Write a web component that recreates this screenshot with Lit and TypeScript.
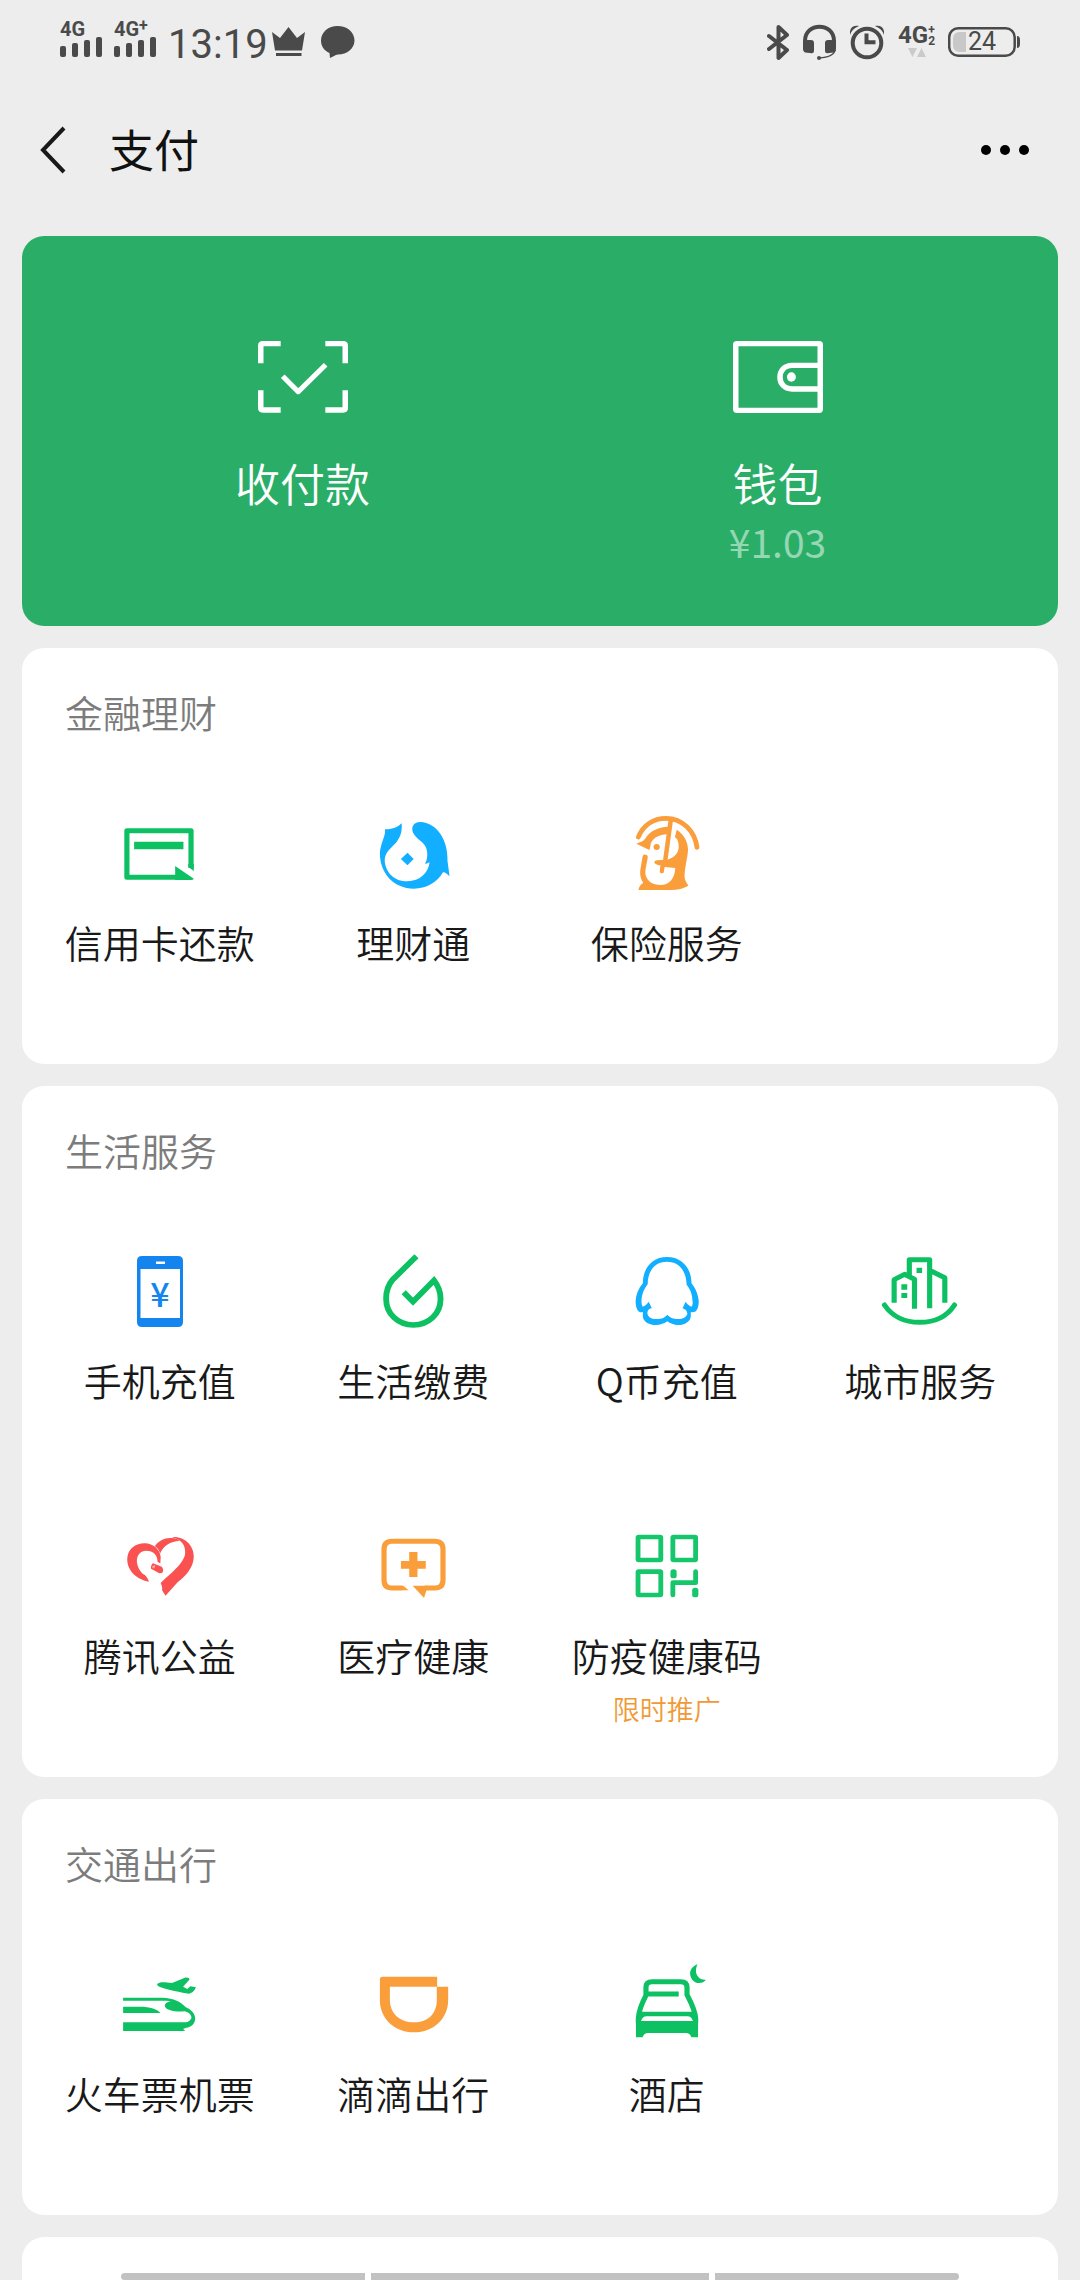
import { LitElement, html, css, svg, nothing, type TemplateResult, type SVGTemplateResult } from "lit";
import { customElement, property } from "lit/decorators.js";

interface Service {
  label: string;
  icon: string;
  note?: string;
}

interface Section {
  title: string;
  items: Service[];
}

interface Glyph {
  box: string;
  color: string;
  art: SVGTemplateResult;
}

const GREEN = "#0dc163";
const BLUE = "#12aeff";
const ORANGE = "#fa9e3b";

const GLYPHS: Record<string, Glyph> = {
  creditCard: {
    box: "348 522 232 240",
    color: GREEN,
    art: svg`
      <path fill="none" stroke="currentColor" stroke-width="15" stroke-linejoin="round" d="M554 684V572H368V712H520" />
      <path fill="currentColor" d="M389 605H532V628H389ZM508 678L562 716Q560 720 554 720H508Z" />
      <path fill="currentColor" d="M546 672V681L562 693V672Z" />`,
  },
  wealth: {
    box: "1085 522 232 240",
    color: BLUE,
    art: svg`
      <path fill="currentColor" d="M1222 546C1270 548 1303 600 1301 662L1307 709C1300 702 1294 696 1288 697C1270 728 1240 746 1203 746C1145 746 1105 700 1105 640C1106 610 1122 590 1120 567C1142 570 1158 560 1168 550C1170 572 1166 590 1152 608C1130 630 1119 640 1119 662C1121 698 1148 724 1184 724C1222 724 1246 698 1249 667C1246 667 1243 672 1236 671C1242 660 1243 650 1242 636C1240 608 1214 602 1202 580C1194 562 1202 546 1222 546Z" />
      <path fill="currentColor" d="M1185 638L1203 657L1185 676L1166 657Z" />`,
  },
  insurance: {
    box: "253 102 232 240",
    color: ORANGE,
    art: svg`
      <path fill="none" stroke="currentColor" stroke-width="14" stroke-linecap="round" d="M286 171C300 135 330 115 366 115C415 115 450 155 456 202" />
      <path fill="none" stroke="currentColor" stroke-width="13" d="M380 120L363 248" />
      <path fill="currentColor" d="M280 191C300 184 303 181 309 171C322 152 345 141 374 140L372 163C345 162 322 178 321 197L318 210Z" />
      <circle fill="currentColor" cx="339" cy="201" r="9" />
      <path fill="currentColor" d="M397 149C418 163 430 185 430 210C428 240 420 262 420 290C421 304 427 308 431 317C418 325 400 330 380 330H286C288 318 294 312 300 308C290 295 290 275 293 262L298 230A7 7 0 0 1 313 233C311 250 304 270 307 285C312 305 328 315 350 315C375 315 391 298 393 264L362 261L360 275A6 6 0 0 1 348 272L350 256C342 256 336 252 332 248C333 243 336 241 340 241L370 239C390 233 402 220 403 202C403 185 400 178 392 171Z" />`,
  },
  phone: {
    box: "0 0 80 80",
    color: "#1485ee",
    art: svg`
      <path fill="currentColor" fill-rule="evenodd" d="M22 4H58Q63 4 63 9V70Q63 75 58 75H22Q17 75 17 70V9Q17 4 22 4ZM20.500 17V66H60V17ZM36 9.500V12H45V9.500Z" />
      <text x="40" y="55" fill="currentColor" font-family="'Noto Sans CJK SC', sans-serif" font-size="34" font-weight="500" text-anchor="middle">¥</text>`,
  },
  utilities: {
    box: "1085 516 232 240",
    color: GREEN,
    art: svg`<path fill="none" stroke="currentColor" stroke-width="17" d="M1211 529L1142 599C1128 616 1123 635 1123 656C1123 702 1158 735 1202 735C1246 735 1281 702 1281 656C1281 636 1274 617 1262 601L1201 665L1174 637" />`,
  },
  qcoin: {
    box: "253 96 232 240",
    color: BLUE,
    art: svg`<path fill="currentColor" fill-rule="evenodd" d="M369 111C415 111 440 148 440 190C452 205 460 225 461 245C461 262 455 276 447 276C443 278 441 276 438 276V290C436 305 420 315 402 315C388 315 378 310 370 304C362 310 350 315 337 315C318 315 301 306 299 290V276C296 276 293 278 290 276C282 272 278 260 278 243C279 225 286 205 299 190C299 148 323 111 369 111ZM369 125C332 125 313 155 313 193C306 203 296 217 295 243C295 250 296 257 299 260C307 257 313 250 316 245L325 265C318 265 313 270 312 278C313 290 322 297 340 297C355 297 363 292 370 284C377 292 386 297 402 297C415 297 425 291 428 282C428 272 420 267 414 265L423 245C427 252 434 257 440 260C443 257 444 250 443 243C442 217 433 203 426 195C425 155 406 125 369 125Z" />`,
  },
  city: {
    box: "989 96 232 240",
    color: GREEN,
    art: svg`
      <g fill="none" stroke="currentColor" stroke-width="15" stroke-linejoin="round">
        <path stroke-linecap="round" d="M1002 255C1025 290 1062 307 1104 307C1146 307 1183 290 1205 255" />
        <path d="M1030 248V179L1060 163L1089 178V266M1074 172V119H1133V265M1133 151L1177 173V248" />
      </g>
      <path fill="currentColor" d="M1051 193H1068V209H1051ZM1051 219H1068V234H1051ZM1095 143H1111V159H1095Z" />`,
  },
  charity: {
    box: "348 81 232 240",
    color: "#fa5151",
    art: svg`
      <path fill="currentColor" d="M432 245C400 240 369 215 369 178C369 150 390 130 420 130C445 131 464 148 466 172L465 190L457 186C457 165 445 152 424 152C405 152 396 168 397 186C399 205 410 220 420 225C426 231 430 238 432 245Z" />
      <path fill="currentColor" d="M449 138C462 120 480 112 498 114C510 115 517 118 520 122C495 124 473 137 464 161C462 150 456 143 449 138Z" />
      <path fill="currentColor" d="M498 111C540 108 562 140 562 170C560 205 540 225 515 247L480 287L470 271C472 262 468 255 466 249C490 225 535 190 537 160C538 135 528 120 498 111Z" />
      <path fill="currentColor" d="M444 190L469 200C474 206 475 215 469 219L462 220L438 206C437 199 440 192 444 190Z" />
      <path fill="none" stroke="#fff" stroke-width="2" d="M441 202L448 197L446 205" />`,
  },
  medical: {
    box: "1085 81 232 240",
    color: ORANGE,
    art: svg`
      <path fill="none" stroke="currentColor" stroke-width="15" d="M1170 264H1140Q1117 264 1117 240V148Q1117 124 1140 124H1264Q1288 124 1288 148V240Q1288 264 1264 264H1235" />
      <path fill="currentColor" d="M1168 257H1173L1188 271H1168ZM1200 257H1245L1240 271L1233 294ZM1190 156H1214V183H1238V206H1214V231H1190V206H1166V183H1190Z" />`,
  },
  healthCode: {
    box: "253 81 232 240",
    color: "#15c66b",
    art: svg`
      <g fill="none" stroke="currentColor" stroke-width="14">
        <rect x="285" y="111" width="66" height="69" rx="2" />
        <rect x="386" y="111" width="66" height="69" rx="2" />
        <rect x="285" y="215" width="66" height="70" rx="2" />
        <path stroke-linecap="round" stroke-linejoin="round" d="M386 285V248H452V215" />
      </g>
      <rect fill="currentColor" x="379" y="208" width="18" height="27" rx="8" />
      <rect fill="currentColor" x="442" y="263" width="18" height="29" rx="8" />`,
  },
  tickets: {
    box: "348 495 232 240",
    color: GREEN,
    art: svg`
      <path fill="currentColor" fill-rule="evenodd" d="M357 593H470C505 594 525 606 539 622C555 629 566 642 566 656C565 672 555 681 540 683L531 687L537 693H357V667H540C552 664 556 655 555 650C552 640 545 636 535 634C510 637 478 630 478 617C479 608 490 604 500 605C490 602 480 602 460 602H357Z" />
      <path fill="currentColor" d="M357 620H405C435 620 458 628 465 639H357Z" />
      <path fill="currentColor" d="M456 552C462 545 475 546 499 549L536 533C545 532 551 535 549 539L531 560L543 567L552 559L568 562C566 570 558 580 548 581C530 580 480 567 466 562C458 559 455 556 456 552Z" />`,
  },
  didi: {
    box: "1085 495 232 240",
    color: ORANGE,
    art: svg`<path fill="currentColor" fill-rule="evenodd" d="M1113 530H1271V560H1303V600C1303 655 1262 697 1204 697C1146 697 1105 655 1105 600V538Q1105 530 1113 530ZM1134 560V600C1134 640 1162 667 1204 667C1246 667 1270 640 1270 600V560Z" />`,
  },
  hotel: {
    box: "253 495 232 240",
    color: GREEN,
    art: svg`
      <path fill="none" stroke="currentColor" stroke-width="15" d="M286 670V655C287 630 298 606 308 586V562Q308 545 326 545H409Q427 545 427 562V584C438 606 451 630 452 655V670M310 582H403" />
      <path fill="currentColor" fill-rule="evenodd" d="M292 635H446L459 655V712H440C436 702 432 699 424 699H314C306 699 302 702 298 712H279V655ZM294 663H444C442 655 436 649 428 649H310C302 649 296 655 294 663Z" />
      <path fill="currentColor" d="M458 493C445 497 436 508 436 521C437 537 448 549 462 549C471 549 478 545 482 539C465 541 453 528 453 513C453 505 455 498 458 493Z" />`,
  },
  scan: {
    box: "746 363 262 216",
    color: "#fff",
    art: svg`
      <g fill="none" stroke="currentColor" stroke-width="16" stroke-linejoin="round">
        <path d="M754 430V377Q754 371 760 371H812M942 371H994Q1000 371 1000 377V430M754 511V564Q754 570 760 570H812M942 570H994Q1000 570 1000 564V511" />
        <path stroke-width="15" d="M818 469L863 515L943 434" />
      </g>`,
  },
  wallet: {
    box: "557 363 262 216",
    color: "#fff",
    art: svg`
      <g fill="none" stroke="currentColor" stroke-width="16">
        <rect x="565" y="371" width="246" height="200" rx="3" />
        <path d="M811 436H729C682 436 682 507 729 507H811" />
      </g>
      <ellipse fill="currentColor" cx="727" cy="471" rx="13" ry="14" />`,
  },
};

const SECTIONS: Section[] = [
  {
    title: "金融理财",
    items: [
      { label: "信用卡还款", icon: "creditCard" },
      { label: "理财通", icon: "wealth" },
      { label: "保险服务", icon: "insurance" },
    ],
  },
  {
    title: "生活服务",
    items: [
      { label: "手机充值", icon: "phone" },
      { label: "生活缴费", icon: "utilities" },
      { label: "Q币充值", icon: "qcoin" },
      { label: "城市服务", icon: "city" },
      { label: "腾讯公益", icon: "charity" },
      { label: "医疗健康", icon: "medical" },
      { label: "防疫健康码", icon: "healthCode", note: "限时推广" },
    ],
  },
  {
    title: "交通出行",
    items: [
      { label: "火车票机票", icon: "tickets" },
      { label: "滴滴出行", icon: "didi" },
      { label: "酒店", icon: "hotel" },
    ],
  },
];

@customElement("pay-icon")
export class PayIcon extends LitElement {
  @property() name = "";

  static styles = css`
    :host {
      display: block;
      width: 80px;
      height: 80px;
    }
    .art {
      display: block;
      width: 100%;
      height: 100%;
      overflow: visible;
    }
  `;

  render() {
    const glyph = GLYPHS[this.name];
    if (!glyph) return nothing;
    return html`<svg class="art" viewBox=${glyph.box} preserveAspectRatio="none" color=${glyph.color} aria-hidden="true">
      ${glyph.art}
    </svg>`;
  }
}

@customElement("status-bar")
export class StatusBar extends LitElement {
  static styles = css`
    :host {
      display: flex;
      justify-content: space-between;
      padding: 22px 60px;
      color: #4a4a4a;
      font-family: Roboto, sans-serif;
    }
    .side {
      display: flex;
      height: 40px;
    }
    .left {
      gap: 12px;
    }
    .right {
      gap: 14px;
    }
    svg {
      display: block;
      height: 40px;
    }
    .signal {
      display: flex;
      flex-direction: column;
      width: 42px;
    }
    .signal svg {
      height: 20px;
      width: 42px;
    }
    .network {
      display: flex;
      height: 15px;
      font-size: 20px;
      line-height: 15px;
      font-weight: 700;
    }
    .plus {
      font-size: 16px;
      line-height: 8px;
    }
    .clock {
      font-size: 40px;
      line-height: 46px;
    }
    .notices {
      display: flex;
      gap: 16px;
      margin-left: -8px;
    }
    .data {
      display: grid;
      grid-template-columns: auto auto;
      grid-template-rows: 26px 12px;
      align-content: start;
      justify-content: start;
      width: 36px;
      font-weight: 700;
    }
    .data .kind {
      font-size: 24px;
      line-height: 26px;
    }
    .data .marks {
      display: flex;
      flex-direction: column;
      padding-top: 3px;
      font-size: 12px;
      line-height: 11px;
    }
    .data svg {
      grid-column: 1 / -1;
      justify-self: center;
      width: 18px;
      height: 10px;
    }
    .battery {
      display: grid;
      width: 72px;
    }
    .battery svg,
    .battery .level {
      grid-area: 1 / 1;
    }
    .battery .level {
      font-size: 25px;
      line-height: 40px;
      padding-left: 20px;
    }
  `;

  private bars(): TemplateResult {
    return html`<svg viewBox="0 37 42 20" fill="currentColor" aria-hidden="true">
      <rect x="0" y="46" width="6" height="11" rx="2" />
      <rect x="12" y="43" width="6" height="14" rx="2" />
      <rect x="24" y="40" width="6" height="17" rx="2" />
      <rect x="36" y="37" width="6" height="20" rx="2" />
    </svg>`;
  }

  render() {
    return html`
      <div class="side left">
        <div class="signal"><span class="network">4G</span>${this.bars()}</div>
        <div class="signal"><span class="network">4G<span class="plus">+</span></span>${this.bars()}</div>
        <time class="clock">13:19</time>
        <div class="notices">
          <svg width="33" viewBox="273 22 33 40" fill="currentColor" aria-hidden="true">
            <path d="M273 32L281 38L289.500 27L298 38L306 32L303 50.500H276ZM277 53H302.500V56H277Z" />
          </svg>
          <svg width="34" viewBox="322 22 34 40" fill="currentColor" aria-hidden="true">
            <path d="M338.500 26C348 26 355.500 32 355.500 40.500C355.500 48.500 348 54.500 339 54.500C336 54.500 334 57 331 58L330.500 53C325 50.500 322 46 322 40.500C322 32 329.500 26 338.500 26Z" />
          </svg>
        </div>
      </div>
      <div class="side right">
        <svg width="22" viewBox="766 22 22 40" fill="none" stroke="currentColor" stroke-width="4" stroke-linecap="round" stroke-linejoin="round" aria-hidden="true">
          <path d="M768 36L786 50L777.500 58V27L786 35L768 49" />
        </svg>
        <svg width="33" viewBox="804 22 33 40" fill="currentColor" aria-hidden="true">
          <path fill="none" stroke="currentColor" stroke-width="4" d="M806 45V41C806 22 835 22 835 41V45" />
          <path d="M804 43Q805 40 809 40H812Q815 40 815 43V51Q815 54 811 53L806 52.500Q804 52 804 49ZM837 43Q836 40 832 40H829Q826 40 826 43V51Q826 54 830 53L835 52.500Q837 52 837 49Z" />
          <path fill="none" stroke="currentColor" stroke-width="1.500" d="M836 50C835 56 828 57.500 820 58" />
          <circle cx="820" cy="58" r="2" />
        </svg>
        <svg width="34" viewBox="851 22 34 40" fill="none" stroke="currentColor" stroke-width="4" aria-hidden="true">
          <circle cx="868" cy="43" r="14.300" />
          <path d="M867.500 33.500V42.300H876.500" stroke-linecap="butt" />
          <path fill="currentColor" stroke="none" d="M851 35C850 28 854 25 860 26C855 28 852 31 851 35ZM885 35C886 28 882 25 876 26C881 28 884 31 885 35Z" />
        </svg>
        <div class="data">
          <span class="kind">4G</span>
          <span class="marks"><span>+</span><span>2</span></span>
          <svg viewBox="0 0 18 10" fill="#cacaca" aria-hidden="true"><path d="M0 0H9L4.500 9ZM9 9H18L13.500 0Z" /></svg>
        </div>
        <div class="battery">
          <svg width="72" viewBox="948 22 72 40" aria-hidden="true">
            <path fill="#c8c8c8" d="M966 32V52H960Q953 52 953 45V39Q953 32 960 32Z" />
            <rect x="949.200" y="28.200" width="65.500" height="27.500" rx="9" fill="none" stroke="currentColor" stroke-width="2.500" />
            <path fill="currentColor" d="M1017 36Q1020 36 1020 40V44Q1020 48 1017 48Z" />
          </svg>
          <span class="level">24</span>
        </div>
      </div>
    `;
  }
}

@customElement("service-section")
export class ServiceSection extends LitElement {
  @property({ attribute: false }) section!: Section;

  static styles = css`
    :host {
      display: block;
      background: #fff;
      border-radius: 22px;
    }
    .title {
      margin: 0;
      padding: 37px 43px 50px;
      font-size: 38px;
      line-height: 54px;
      font-weight: 350;
      color: #7c7c7c;
    }
    .grid {
      display: grid;
      grid-template-columns: repeat(4, 1fr);
      grid-auto-rows: minmax(275px, auto);
      padding: 0 11px;
      margin: 0;
      list-style: none;
    }
    .item {
      display: flex;
      flex-direction: column;
      align-items: center;
      padding-top: 25px;
      color: #191919;
      text-decoration: none;
      white-space: nowrap;
    }
    .label {
      margin-top: 21px;
      font-size: 38px;
      line-height: 54px;
      font-weight: 350;
    }
    .note {
      margin-top: 8px;
      font-size: 27px;
      line-height: 38px;
      font-weight: 350;
      color: #f09a37;
    }
  `;

  render() {
    return html`
      <h2 class="title">${this.section.title}</h2>
      <ul class="grid">
        ${this.section.items.map(
          (item) => html`<li>
            <a class="item" href="#">
              <pay-icon name=${item.icon}></pay-icon>
              <span class="label">${item.label}</span>
              ${item.note ? html`<span class="note">${item.note}</span>` : nothing}
            </a>
          </li>`
        )}
      </ul>
    `;
  }
}

@customElement("app-root")
export class AppRoot extends LitElement {
  static styles = css`
    :host {
      display: flex;
      flex-direction: column;
      min-height: 100vh;
      background: #ededed;
      font-family: "Noto Sans CJK SC", sans-serif;
    }
    .header {
      display: flex;
      align-items: center;
      height: 132px;
      padding: 0 40px;
      color: #191919;
    }
    .tool {
      display: flex;
      align-items: center;
      padding: 0;
      border: 0;
      background: none;
      color: inherit;
    }
    .tool svg {
      display: block;
    }
    .heading {
      flex: 1;
      margin: 0 0 0 43px;
      font-size: 45px;
      line-height: 64px;
      font-weight: 400;
      padding-bottom: 2px;
      color: #111;
    }
    .more {
      padding-right: 10px;
      color: #000;
    }
    .content {
      display: flex;
      flex: 1;
      flex-direction: column;
      gap: 22px;
      padding: 20px 22px 0;
    }
    .hero {
      display: grid;
      grid-template-columns: 1fr 1fr;
      padding: 105px 43px 60px;
      border-radius: 22px;
      background: #2aae67;
    }
    .entry {
      display: flex;
      flex-direction: column;
      align-items: center;
      color: #fff;
      text-decoration: none;
    }
    .entry pay-icon {
      width: 90px;
      height: 72px;
    }
    .name {
      margin-top: 40px;
      font-size: 45px;
      line-height: 60px;
      font-weight: 350;
    }
    .balance {
      margin-top: 3px;
      font-size: 39px;
      line-height: 50px;
      font-weight: 400;
      color: #95d7b3;
    }
    .next {
      flex: 1;
      min-height: 43px;
      border-radius: 22px 22px 0 0;
      background: #fff;
    }
    .gesture {
      position: fixed;
      left: 0;
      right: 0;
      bottom: 0;
      display: grid;
      grid-template-columns: 244fr 338fr 244fr;
      gap: 6px;
      padding: 0 121px;
    }
    .bar {
      height: 7px;
      background: #c2c2c2;
    }
    .bar:first-child {
      border-radius: 4px 0 0 4px;
    }
    .bar:last-child {
      border-radius: 0 4px 4px 0;
    }
  `;

  render() {
    return html`
      <status-bar></status-bar>
      <header class="header">
        <button class="tool" type="button" aria-label="返回">
          <svg width="26" height="48" viewBox="0 0 26 48" fill="none" stroke="currentColor" stroke-width="4" aria-hidden="true">
            <path d="M24 2L3 24L24 46" />
          </svg>
        </button>
        <h1 class="heading">支付</h1>
        <button class="tool more" type="button" aria-label="更多">
          <svg width="50" height="12" viewBox="0 0 50 12" fill="currentColor" aria-hidden="true">
            <circle cx="6" cy="6" r="5" />
            <circle cx="25" cy="6" r="5" />
            <circle cx="44" cy="6" r="5" />
          </svg>
        </button>
      </header>
      <main class="content">
        <nav class="hero">
          <a class="entry" href="#">
            <pay-icon name="scan"></pay-icon>
            <span class="name">收付款</span>
          </a>
          <a class="entry" href="#">
            <pay-icon name="wallet"></pay-icon>
            <span class="name">钱包</span>
            <span class="balance">¥1.03</span>
          </a>
        </nav>
        ${SECTIONS.map((section) => html`<service-section .section=${section}></service-section>`)}
        <div class="next"></div>
      </main>
      <div class="gesture" aria-hidden="true">
        <span class="bar"></span>
        <span class="bar"></span>
        <span class="bar"></span>
      </div>
    `;
  }
}
